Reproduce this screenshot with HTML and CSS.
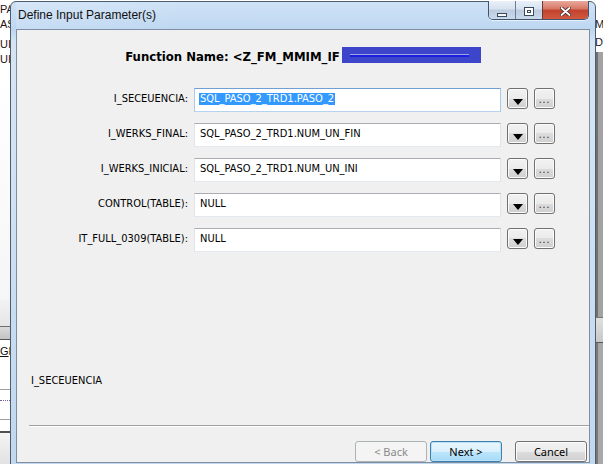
FILE: index.html
```html
<!DOCTYPE html>
<html lang="en">
<head>
<meta charset="UTF-8">
<meta name="viewport" content="width=device-width, initial-scale=1.0">
<title>Define Input Parameter(s)</title>
<link rel="stylesheet" href="styles.css">
</head>
<body>
<div class="desktop">

  <!-- what shows of the app behind the dialog -->
  <div class="behind-left">
    <div class="bl-top">
      <span class="bl-line">PA</span>
      <span class="bl-line">AS</span>
      <span class="bl-line bl-gap">UI</span>
      <span class="bl-line">UI</span>
    </div>
    <div class="bl-fill"></div>
    <div class="bl-toolbar"></div>
    <div class="bl-toolbar2"></div>
    <div class="bl-menu"><u>G</u>EI</div>
    <div class="bl-list">
      <div class="bl-dots"></div>
    </div>
    <div class="bl-bottom"></div>
  </div>

  <div class="window">
    <div class="titlebar">
      <span class="title">Define Input Parameter(s)</span>
      <div class="caption-buttons">
        <span class="cap cap-min"><i></i></span>
        <span class="cap cap-max"><i></i></span>
        <span class="cap cap-close">
          <svg width="11" height="9" viewBox="0 0 11 9">
            <path d="M1.5 1 L9.5 8 M9.5 1 L1.5 8" stroke="#3b2626" stroke-width="3.4" stroke-linecap="round"/>
            <path d="M1.5 1 L9.5 8 M9.5 1 L1.5 8" stroke="#ffffff" stroke-width="1.8" stroke-linecap="round"/>
          </svg>
        </span>
      </div>
    </div>

    <div class="client">
      <h1 class="fn-name">Function Name: &lt;Z_FM_MMIM_IF<span class="redact"><i></i></span></h1>

      <div class="params">
        <label>I_SECEUENCIA:</label>
        <div class="field focused"><span class="sel">SQL_PASO_2_TRD1.PASO_2</span></div>
        <button class="drop" type="button"><i></i></button>
        <button class="more" type="button">...</button>

        <label>I_WERKS_FINAL:</label>
        <div class="field">SQL_PASO_2_TRD1.NUM_UN_FIN</div>
        <button class="drop" type="button"><i></i></button>
        <button class="more" type="button">...</button>

        <label>I_WERKS_INICIAL:</label>
        <div class="field">SQL_PASO_2_TRD1.NUM_UN_INI</div>
        <button class="drop" type="button"><i></i></button>
        <button class="more" type="button">...</button>

        <label>CONTROL(TABLE):</label>
        <div class="field">NULL</div>
        <button class="drop" type="button"><i></i></button>
        <button class="more" type="button">...</button>

        <label>IT_FULL_0309(TABLE):</label>
        <div class="field">NULL</div>
        <button class="drop" type="button"><i></i></button>
        <button class="more" type="button">...</button>
      </div>

      <div class="desc">I_SECEUENCIA</div>
      <div class="separator"></div>

      <div class="wizard-buttons">
        <button class="btn btn-back" type="button" disabled>&lt; Back</button>
        <button class="btn btn-next" type="button">Next &gt;</button>
        <button class="btn" type="button">Cancel</button>
      </div>
    </div>
  </div>

  <div class="behind-right">
    <div class="br-top">
      <span class="br-line">M</span>
      <span class="br-line">D</span>
    </div>
    <div class="br-fill"></div>
    <div class="br-band"></div>
    <div class="br-fill2"></div>
  </div>

</div>
</body>
</html>
```

FILE: styles.css
```css
* {
  box-sizing: border-box;
}

body {
  margin: 0;
  width: 603px;
  height: 464px;
  overflow: hidden;
  background: #fff;
  font-family: 'DejaVu Sans Condensed', 'DejaVu Sans', sans-serif;
  font-size: 11px;
  color: #000;
}

.desktop {
  display: flex;
  width: 603px;
  height: 464px;
  overflow: hidden;
}

/* ---- background app, left of the dialog ---- */
.behind-left {
  width: 10px;
  flex-shrink: 0;
  display: flex;
  flex-direction: column;
  overflow: hidden;
  background: #fff;
  font-family: 'Liberation Sans', Arial, sans-serif;
}
.bl-top {
  height: 70px;
  display: flex;
  flex-direction: column;
  padding-top: 2px;
}
.bl-line {
  display: block;
  line-height: 14px;
  height: 14px;
  margin-bottom: 1px;
  color: #2a1414;
  white-space: nowrap;
}
.bl-gap {
  margin-top: 5px;
}
.bl-fill {
  height: 230px;
  background: linear-gradient(#fff, #f6f6f6);
}
.bl-toolbar {
  height: 27px;
  background: linear-gradient(#f2f2f2, #e6e6e6);
  border-bottom: 1px solid #6e6e6e;
}
.bl-toolbar2 {
  height: 13px;
  background: linear-gradient(#dadada, #c4c4c4);
  border-bottom: 1px solid #555;
}
.bl-menu {
  height: 49px;
  padding-top: 5px;
  line-height: 13px;
  white-space: nowrap;
  color: #111;
}
.bl-list {
  height: 31px;
  border-top: 1px solid #a0a0a0;
  border-bottom: 1px solid #a0a0a0;
  padding-top: 10px;
}
.bl-dots {
  border-top: 1px dotted #7a5fa0;
}
.bl-bottom {
  flex: 1;
  border-top: 2px solid #505050;
  margin-top: 11px;
  background: linear-gradient(#f4f4f4, #e2e2e2);
}

/* ---- background app, right of the dialog ---- */
.behind-right {
  width: 7px;
  flex-shrink: 0;
  display: flex;
  flex-direction: column;
  overflow: hidden;
  font-family: 'Liberation Sans', Arial, sans-serif;
}
.br-top {
  height: 52px;
  background: #fff;
  padding-top: 17px;
}
.br-line {
  display: block;
  line-height: 14px;
  height: 18px;
  margin-left: -1px;
  color: #222;
}
.br-fill {
  height: 265px;
  background: linear-gradient(to right, #707070 0, #707070 2px, #a2a2a2 2px);
}
.br-band {
  height: 26px;
  background: linear-gradient(#e0e0e0, #c8c8c8);
  border-top: 1px solid #777;
  border-bottom: 1px solid #555;
}
.br-fill2 {
  flex: 1;
  background: linear-gradient(to right, #787878 0, #787878 2px, #a8a8a8 2px);
}

/* ---- dialog frame ---- */
.window {
  width: 586px;
  height: 480px;
  flex-shrink: 0;
  margin-top: 1px;
  border: 1px solid #4d5d70;
  border-radius: 6px 6px 0 0;
  padding: 0 5px;
  display: flex;
  flex-direction: column;
  background: linear-gradient(#cfe2f6 0, #bdd7f1 28px, #d6e5f4 40px, #cfe1f3 200px, #c0d7ef 100%);
}

.titlebar {
  height: 27px;
  display: flex;
  align-items: flex-start;
  padding-left: 2px;
  background: linear-gradient(100deg, rgba(255,255,255,0.15), rgba(255,255,255,0) 30%);
}
.title {
  padding-top: 6px;
  line-height: 15px;
  font-family: 'Liberation Sans', Arial, sans-serif;
  font-size: 12px;
  color: #111;
}

.caption-buttons {
  margin-left: auto;
  margin-right: 1px;
  margin-top: -1px;
  display: flex;
  height: 19px;
  border: 1px solid #3f5470;
  border-top-width: 0;
  border-radius: 0 0 5px 5px;
  overflow: hidden;
  box-shadow: 0 1px 0 rgba(255,255,255,0.6);
}
.cap {
  display: flex;
  justify-content: center;
  align-items: flex-start;
  height: 18px;
  background: linear-gradient(#e9f0f8 0, #d7e2ef 45%, #bccbdd 50%, #c9d8ea 100%);
}
.cap-min {
  width: 26px;
  padding-top: 12px;
}
.cap-min i {
  display: block;
  width: 10px;
  height: 4px;
  border: 1px solid #38495e;
  background: #f4f6f9;
}
.cap-max {
  width: 27px;
  border-left: 1px solid #6b7e96;
  padding-top: 6px;
}
.cap-max i {
  display: block;
  width: 10px;
  height: 9px;
  border: 1px solid #38495e;
  background: #fff;
  box-shadow: inset 0 2px 0 #fff, inset 0 0 0 2px #fff, inset 0 0 0 3px #38495e;
}
.cap-close {
  width: 46px;
  border-left: 1px solid #6b3a36;
  padding-top: 6px;
  background: linear-gradient(#e8a99c 0, #d77563 45%, #c2412f 50%, #cf5a3e 100%);
}

/* ---- client area ---- */
.client {
  height: 434px;
  border: 1px solid #7f8fa3;
  background: #f0f0f0;
  display: flex;
  flex-direction: column;
}

.fn-name {
  margin: 0;
  padding-top: 19px;
  display: flex;
  justify-content: center;
  align-items: center;
  font-size: 13px;
  font-weight: bold;
  line-height: 16px;
  color: #000;
}
.redact {
  display: flex;
  align-items: center;
  width: 139px;
  height: 16px;
  margin-left: 2px;
  padding: 0 12px 0 8px;
  position: relative;
  top: -2px;
  background: #3d46cb;
}
.redact i {
  display: block;
  width: 100%;
  height: 3px;
  margin-top: 1px;
  background: #1a1fe0;
  border-top: 1px solid #9ea3ea;
}

.params {
  margin-top: 23px;
  display: grid;
  grid-template-columns: 171px 307px 21px 21px;
  column-gap: 6px;
  row-gap: 11px;
  align-items: start;
}
.params label {
  text-align: right;
  line-height: 21px;
  white-space: nowrap;
}
.field {
  height: 24px;
  border: 1px solid;
  border-color: #abadb3 #e2e3ea #e3e9ef #e2e3ea;
  background: #fff;
  padding: 0 5px;
  line-height: 20px;
  white-space: nowrap;
  overflow: hidden;
}
.field.focused {
  border-color: #6f9fd3 #a9c9e8 #b5d3ee #a9c9e8;
  padding-left: 4px;
}
.sel {
  display: inline-block;
  line-height: 12px;
  padding: 0 1px;
  background: #3399ff;
  color: #fff;
}

.drop,
.more {
  width: 21px;
  height: 21px;
  margin: 0;
  padding: 0;
  border: 1px solid #707070;
  border-radius: 3px;
  background: linear-gradient(#f2f2f2 0, #ebebeb 50%, #dddddd 50%, #cfcfcf 100%);
  box-shadow: inset 0 0 0 1px #fbfbfb;
  display: flex;
  justify-content: center;
  align-items: flex-start;
  font-family: inherit;
}
.drop {
  padding-top: 10px;
}
.drop i {
  display: block;
  width: 0;
  height: 0;
  border-left: 5px solid transparent;
  border-right: 5px solid transparent;
  border-top: 6px solid #000;
}
.more {
  padding-top: 6px;
  font-size: 10px;
  line-height: 10px;
  letter-spacing: 1px;
  color: #1a1a1a;
}

.desc {
  margin-top: auto;
  padding-left: 14px;
  line-height: 14px;
}
.separator {
  margin: 37px 0 0 12px;
  height: 2px;
  border-top: 1px solid #a0a0a0;
  border-bottom: 1px solid #fff;
}

.wizard-buttons {
  margin-top: 14px;
  display: flex;
  justify-content: flex-end;
  padding-right: 2px;
}
.btn {
  width: 72px;
  height: 21px;
  margin: 0;
  padding: 0;
  border: 1px solid #707070;
  border-radius: 3px;
  background: linear-gradient(#f2f2f2 0, #ebebeb 50%, #dddddd 50%, #cfcfcf 100%);
  box-shadow: inset 0 0 0 1px #fcfcfc;
  font-family: 'Noto Sans', 'Liberation Sans', sans-serif;
  font-size: 11px;
  line-height: 17px;
  color: #000;
}
.btn-back {
  margin-right: 3px;
  border-color: #adb2b5;
  background: #f4f4f4;
  box-shadow: none;
  color: #8a8a8a;
}
.btn-next {
  margin-right: 13px;
  border-color: #3c7fb1;
  box-shadow: inset 0 0 0 1px #b9e2f8;
  background: linear-gradient(#eaf6fd 0, #d9f0fc 50%, #bee6fd 50%, #a7d9f5 100%);
}
```
